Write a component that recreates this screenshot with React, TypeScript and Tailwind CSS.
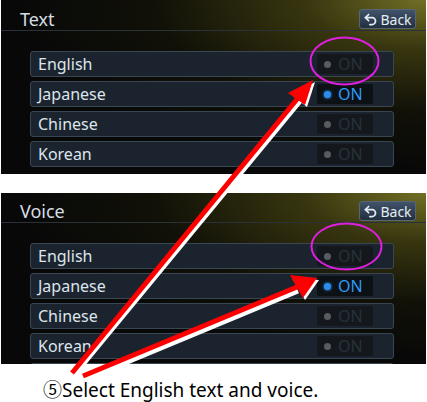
import { Undo2 } from "lucide-react";

const langs = ["English", "Japanese", "Chinese", "Korean"];

function OnButton({ active }: { active: boolean }) {
  return (
    <div
      className={`flex h-[20px] w-[56px] items-center gap-[7px] rounded-[2px] pl-[7px] text-[16px] leading-none ${
        active ? "bg-[#0c1116] text-[#2e9cf6]" : "bg-[#14181c] text-[#27323c]"
      }`}
    >
      <span
        className={`h-[7px] w-[7px] rounded-full ${
          active ? "bg-[#2a8df0] shadow-[0_0_3px_#3aa0ff]" : "bg-[#555c63]"
        }`}
      />
      ON
    </div>
  );
}

function Panel({
  title,
  height,
  headerH,
  extraRow,
}: {
  title: string;
  height: string;
  headerH: string;
  extraRow?: boolean;
}) {
  return (
    <div
      className={`mx-[1px] overflow-hidden ${height} bg-[radial-gradient(ellipse_at_100%_0%,#716f26_0%,#38360f_20%,#111108_45%,#080808_68%)]`}
    >
      {/* Header */}
      <div className={`flex ${headerH} items-end justify-between border-b border-[#2b3138] pb-[1px] pl-[19px] pr-[10px]`}>
        <span className="text-[18px] leading-[20px] text-[#d6dde3]">{title}</span>
        <div className="flex h-[20px] w-[57px] items-center justify-center gap-[2px] rounded-[3px] border border-[#566677] bg-gradient-to-b from-[#41526a] to-[#223040] text-[14px] text-[#e4ebf2]">
          <Undo2 size={15} strokeWidth={2.8} />
          Back
        </div>
      </div>

      {/* Rows */}
      <div className="ml-[29px] mt-[20px] flex w-[364px] flex-col gap-[4px]">
        {langs.map((l, i) => (
          <div
            key={l}
            className="flex h-[26px] items-center justify-between rounded-[3px] border border-[#3a4652] bg-[#1b242e] pl-[7px] pr-[20px]"
          >
            <span className="text-[16px] text-[#dde5ec]">{l}</span>
            <OnButton active={i === 1} />
          </div>
        ))}
        {extraRow && (
          <div className="h-[26px] rounded-[3px] border border-[#3a4652] bg-[#1b242e]" />
        )}
      </div>
    </div>
  );
}

export default function App() {
  return (
    <div
      className="relative h-[402px] w-[427px] overflow-hidden bg-white"
      style={{ fontFamily: '"Noto Sans", "Noto Sans CJK JP", sans-serif' }}
    >
      <Panel title="Text" height="h-[174px]" headerH="h-[31px]" />
      <div className="h-[19px]" />
      <Panel title="Voice" height="h-[171px]" headerH="h-[30px]" extraRow />

      {/* Caption */}
      <p className="mt-[17px] pl-[43px] text-[19px] leading-none text-black">
        ⑤Select English text and voice.
      </p>

      {/* Callouts */}
      <svg className="absolute left-0 top-0" width="427" height="402" viewBox="0 0 427 402">
        <ellipse cx="344.5" cy="61" rx="34" ry="23.5" fill="none" stroke="#e01ee0" strokeWidth="2" />
        <ellipse cx="346.5" cy="246.5" rx="35" ry="23" fill="none" stroke="#e01ee0" strokeWidth="2" />

        {/* arrow to text panel */}
        <line x1="75" y1="374" x2="301" y2="100" stroke="white" strokeWidth="5" />
        <polygon points="315,82 307,107 292,95" fill="white" />
        <line x1="72" y1="373" x2="298" y2="98" stroke="#f00" strokeWidth="5" />
        <polygon points="313,80 305,105 288,93" fill="#f00" />

        {/* arrow to voice panel */}
        <line x1="84" y1="380" x2="298" y2="291" stroke="white" strokeWidth="5" />
        <polygon points="319,280 305,300 292,278" fill="white" />
        <line x1="83" y1="376" x2="297" y2="287" stroke="#f00" strokeWidth="5" />
        <polygon points="317,278 303,298 290,275" fill="#f00" />
      </svg>
    </div>
  );
}
